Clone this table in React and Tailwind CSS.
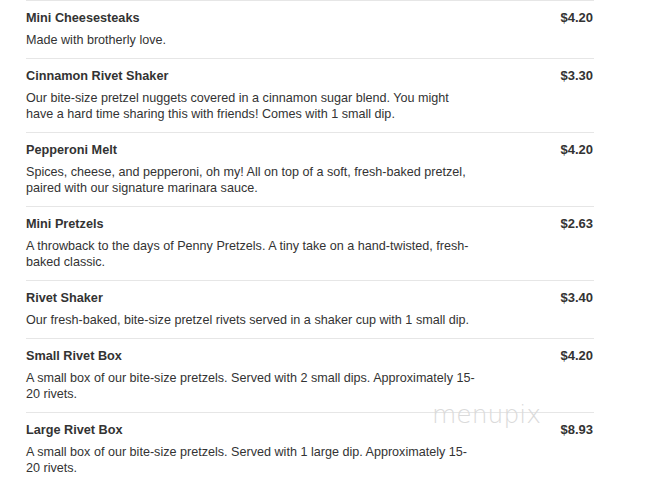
import React from "react";

const items = [
  { name: "Mini Cheesesteaks", price: "$4.20", desc: "Made with brotherly love." },
  {
    name: "Cinnamon Rivet Shaker",
    price: "$3.30",
    desc: "Our bite-size pretzel nuggets covered in a cinnamon sugar blend. You might have a hard time sharing this with friends! Comes with 1 small dip.",
  },
  {
    name: "Pepperoni Melt",
    price: "$4.20",
    desc: "Spices, cheese, and pepperoni, oh my! All on top of a soft, fresh-baked pretzel, paired with our signature marinara sauce.",
  },
  {
    name: "Mini Pretzels",
    price: "$2.63",
    desc: "A throwback to the days of Penny Pretzels. A tiny take on a hand-twisted, fresh-baked classic.",
  },
  {
    name: "Rivet Shaker",
    price: "$3.40",
    desc: "Our fresh-baked, bite-size pretzel rivets served in a shaker cup with 1 small dip.",
  },
  {
    name: "Small Rivet Box",
    price: "$4.20",
    desc: "A small box of our bite-size pretzels. Served with 2 small dips. Approximately 15-20 rivets.",
  },
  {
    name: "Large Rivet Box",
    price: "$8.93",
    desc: "A small box of our bite-size pretzels. Served with 1 large dip. Approximately 15-20 rivets.",
  },
];

export default function App() {
  return (
    <div className="relative h-[498px] w-[665px] overflow-hidden bg-white font-['Liberation_Sans',Arial,sans-serif] text-[#333]">
      <div className="ml-[26px] w-[568px]">
        {items.map((item) => (
          <div key={item.name} className="flex justify-between border-t border-[#e6e6e6] pt-[9px] pb-[10px]">
            <div className="w-[451px]">
              <div className="text-[12.7px] font-bold leading-[16px]">{item.name}</div>
              <div className="mt-[6px] text-[12.6px] leading-[16px]">{item.desc}</div>
            </div>
            <div className="pr-px text-[13px] font-bold leading-[16px]">{item.price}</div>
          </div>
        ))}
      </div>
      <div className="absolute left-[432px] top-[400px] text-[25px] font-extralight leading-[30px] text-[#dadada] font-['DejaVu_Sans',sans-serif]">
        menupix
      </div>
    </div>
  );
}
